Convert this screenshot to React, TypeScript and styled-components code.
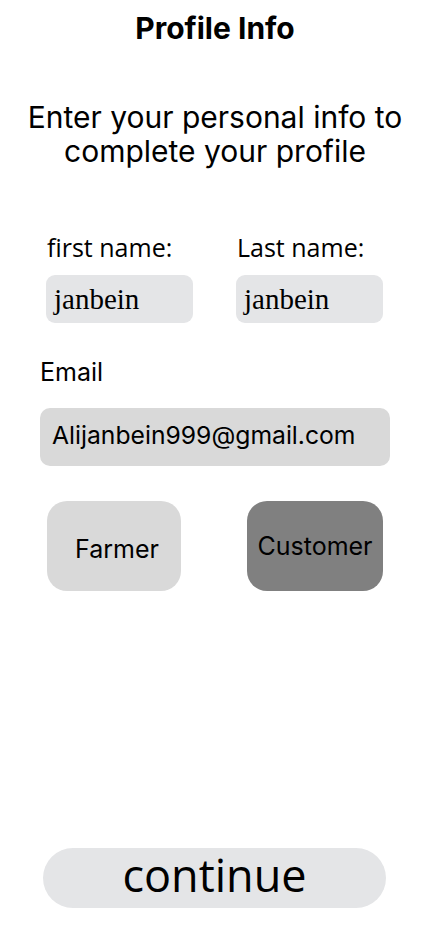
import React from "react";
import styled, { createGlobalStyle } from "styled-components";

const Global = createGlobalStyle`
  *, *::before, *::after { box-sizing: border-box; }
  html, body { margin: 0; padding: 0; background: #ffffff; }
  body { font-family: Inter, "Liberation Sans", sans-serif; color: #000; }
`;

const Page = styled.div`
  width: 430px;
  height: 932px;
  display: flex;
  flex-direction: column;
  padding-top: 10px;
`;

const Title = styled.h1`
  margin: 0;
  font-family: Inter, sans-serif;
  font-weight: 700;
  font-size: 30px;
  line-height: 36px;
  text-align: center;
`;

const Subtitle = styled.p`
  margin: 54px 0 0;
  font-family: Inter, sans-serif;
  font-weight: 400;
  font-size: 30px;
  line-height: 34px;
  text-align: center;
`;

const NameRow = styled.div`
  display: grid;
  grid-template-columns: 147px 147px;
  column-gap: 43px;
  padding-left: 46px;
  margin-top: 64px;
`;

const Field = styled.div`
  display: flex;
  flex-direction: column;
`;

const NameLabel = styled.label`
  font-family: "Open Sans", sans-serif;
  font-size: 25px;
  line-height: 30px;
  padding-left: 1px;
`;

const NameBox = styled.div`
  margin-top: 13px;
  height: 48px;
  background: #e4e5e7;
  border-radius: 9px;
  display: flex;
  align-items: center;
  padding-left: 8px;
  font-family: "Liberation Serif", serif;
  font-size: 29px;
`;

const EmailBlock = styled.div`
  display: flex;
  flex-direction: column;
  padding: 0 40px;
  margin-top: 34px;
`;

const EmailLabel = styled.label`
  font-family: Inter, sans-serif;
  font-size: 25px;
  line-height: 30px;
`;

const EmailBox = styled.div`
  margin-top: 21px;
  height: 58px;
  background: #d9d9d9;
  border-radius: 10px;
  display: flex;
  align-items: center;
  padding: 0 12px 4px;
  font-family: Inter, sans-serif;
  font-size: 24.7px;
`;

const RoleRow = styled.div`
  display: flex;
  justify-content: space-between;
  padding: 0 47px;
  margin-top: 35px;
`;

const RoleButton = styled.button<{ $active?: boolean }>`
  width: ${(p) => (p.$active ? 136 : 134)}px;
  height: 90px;
  border: none;
  border-radius: 20px;
  background: ${(p) => (p.$active ? "#808080" : "#d9d9d9")};
  font-family: Inter, sans-serif;
  font-size: 25px;
  color: #000;
  display: flex;
  align-items: center;
  justify-content: center;
  padding: ${(p) => (p.$active ? "0" : "5px 0 0 6px")};
`;

const Spacer = styled.div`
  flex: 1;
`;

const ContinueButton = styled.button`
  align-self: flex-start;
  margin: 0 0 24px 43px;
  width: 343px;
  height: 60px;
  border: none;
  border-radius: 30px;
  background: #e4e5e7;
  font-family: "Open Sans", sans-serif;
  font-size: 45px;
  line-height: 53px;
  color: #000;
  padding: 0 0 7px;
`;

export default function App() {
  return (
    <>
      <Global />
      <Page>
        <Title>Profile Info</Title>
        <Subtitle>
          Enter your personal info to
          <br />
          complete your profile
        </Subtitle>
        <NameRow>
          <Field>
            <NameLabel>first name:</NameLabel>
            <NameBox>janbein</NameBox>
          </Field>
          <Field>
            <NameLabel>Last name:</NameLabel>
            <NameBox>janbein</NameBox>
          </Field>
        </NameRow>
        <EmailBlock>
          <EmailLabel>Email</EmailLabel>
          <EmailBox>Alijanbein999@gmail.com</EmailBox>
        </EmailBlock>
        <RoleRow>
          <RoleButton>Farmer</RoleButton>
          <RoleButton $active>Customer</RoleButton>
        </RoleRow>
        <Spacer />
        <ContinueButton>continue</ContinueButton>
      </Page>
    </>
  );
}
